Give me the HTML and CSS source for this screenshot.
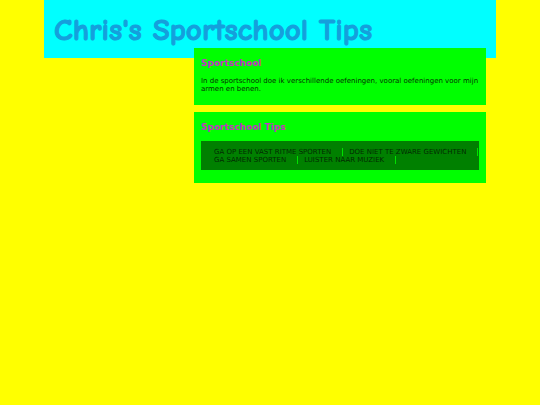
FILE: index.html
```html
<!DOCTYPE html>
<html lang="nl">
<head>
<meta charset="utf-8">
<meta name="viewport" content="width=device-width, initial-scale=1">
<title>Chris's Sportschool Tips</title>
<link rel="stylesheet" href="styles.css">
</head>
<body>
<div class="page">
<header class="banner">
<h1>Chris's Sportschool Tips</h1>
</header>
<main class="content">
<section class="card">
<h2>Sportschool</h2>
<p>In de sportschool doe ik verschillende oefeningen, vooral oefeningen voor mijn armen en benen.</p>
</section>
<section class="card">
<h2>Sportschool Tips</h2>
<ul class="tips">
<li>Ga op een vast ritme sporten</li>
<li>Doe niet te zware gewichten</li>
<li>Ga samen sporten</li>
<li>Luister naar muziek</li>
</ul>
</section>
</main>
</div>
</body>
</html>
```
FILE: styles.css
```css
* {
  box-sizing: border-box;
}

body {
  margin: 0;
  background: #ffff00;
  color: #043004;
  font: 7px/8px Verdana, "DejaVu Sans", sans-serif;
}

.page {
  margin: 0 44px;
}

.banner {
  padding: 11px 10px 9px;
  background: #00ffff;
}

h1 {
  margin: 0;
  color: #159fdc;
  font: bold 31px/38px "Comic Sans MS", "Comic Neue", "Comic Relief", "DejaVu Sans", sans-serif;
  white-space: nowrap;
  -webkit-text-stroke: 1px #159fdc;
}

.content {
  display: flex;
  flex-direction: column;
  gap: 7px;
  margin: -10px 10px 0 150px;
}

.card {
  padding: 9px 7px 13px;
  background: #00ff00;
}

.card:first-child {
  padding-bottom: 12px;
}

h2 {
  margin: 0 0 7px;
  color: #c235c2;
  font-size: 9px;
  line-height: 13px;
}

p {
  margin: 0;
}

.tips {
  display: flex;
  flex-wrap: wrap;
  margin: 0;
  padding: 7px 0 6px 7px;
  background: #008000;
  color: #032b03;
  list-style: none;
  text-transform: uppercase;
}

.tips li {
  padding: 0 11px 0 6px;
  border-right: 1px solid #00e000;
}
```
